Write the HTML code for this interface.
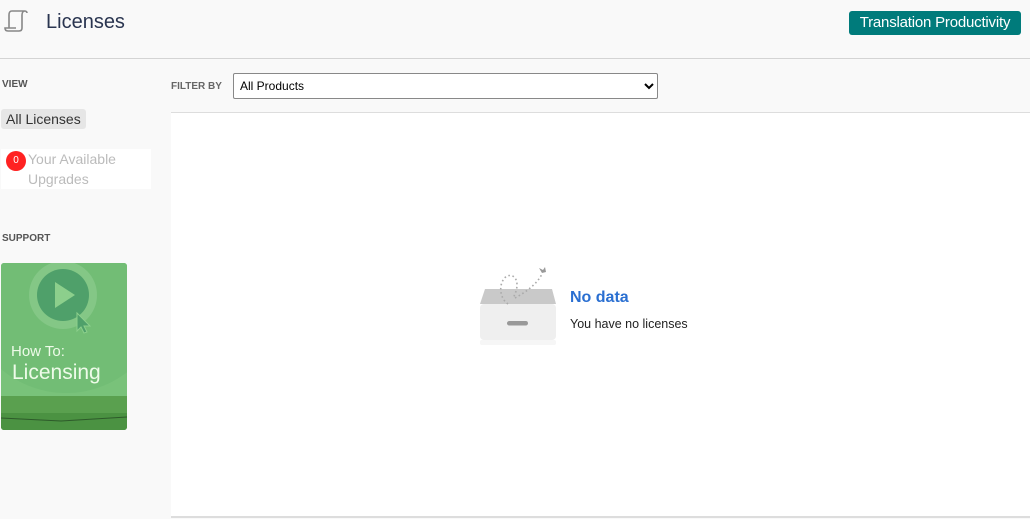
<!DOCTYPE html>
<html><head><meta charset="utf-8"><style>
*{margin:0;padding:0;box-sizing:border-box}
body{width:1030px;height:519px;background:#f9f9f9;font-family:"Liberation Sans",sans-serif;position:relative;overflow:hidden}
.hdr{position:absolute;left:0;top:0;width:1030px;height:59px;border-bottom:1px solid #d4d4d4}
.title{position:absolute;left:46px;top:11px;font-size:20px;color:#2a3550}
.tp{position:absolute;left:849px;top:11px;width:172px;height:24px;background:#007b7b;color:#fff;border-radius:3px;font-size:15px;text-align:center;line-height:24px;letter-spacing:-0.2px}
.lbl{position:absolute;font-size:10px;font-weight:bold;color:#555}
.all{position:absolute;left:1px;top:109px;width:85px;height:20px;background:#e6e6e6;border-radius:3px;font-size:14px;color:#333;padding-left:5px;line-height:20px}
.upg{position:absolute;left:1px;top:149px;width:150px;height:40px;background:#fff;font-size:14px;color:#bbb;line-height:20px;padding-left:27px}
.badge{position:absolute;left:5px;top:2px;width:20px;height:20px;border-radius:50%;background:#f22;color:#fff;font-size:10px;text-align:center;line-height:20px}
.card{position:absolute;left:1px;top:263px;width:126px;height:167px;border-radius:3px;overflow:hidden;background:#79c27a}
.main{position:absolute;left:171px;top:112px;width:859px;height:406px;background:#fff;border-top:1px solid #ddd;border-bottom:2px solid #ddd}
select{position:absolute;left:233px;top:73px;width:425px;height:26px;font-size:12px;font-family:"Liberation Sans",sans-serif;border:1px solid #888;border-radius:2px;background:#fff;padding-left:2px}
</style></head><body>
<div class="hdr">
<svg style="position:absolute;left:4px;top:8px" width="24" height="26" viewBox="0 0 24 26" fill="none" stroke="#888" stroke-width="1.6"><path d="M8 3h13c-2 0-3 2-3 4v13c0 2-1 3-3 3H4c-2 0-3-1-3-3h11"/><path d="M8 3c-2 0-3 1-3 4v13"/><path d="M21 3c1 0 2 1 2 2"/></svg>
<div class="title">Licenses</div>
<div class="tp">Translation Productivity</div>
</div>
<div class="lbl" style="left:2px;top:79px">VIEW</div>
<div class="all">All Licenses</div>
<div class="upg"><div class="badge">0</div>Your Available<br>Upgrades</div>
<div class="lbl" style="left:2px;top:233px">SUPPORT</div>
<div class="card">
<svg width="126" height="167" style="position:absolute;left:0;top:0">
<circle cx="65" cy="30" r="100" fill="#72bd75"/>
<circle cx="62" cy="32" r="34" fill="#84c786"/>
<circle cx="62" cy="32" r="26" fill="#4fa06a"/>
<path d="M54 19v26l20-13z" fill="#8ccf8c"/>
<path d="M76 50l0 18 4-4 3 6 3-1-3-6 6 0z" fill="#4fa06a" stroke="#8ccf8c" stroke-width="1"/>
<rect x="0" y="133" width="126" height="34" fill="#5aa04f"/>
<rect x="0" y="150" width="126" height="17" fill="#4b9242"/>
<path d="M0 155 L60 158 L126 154" stroke="#2d5a2a" stroke-width="1" fill="none"/>
<text x="10" y="93" font-family="Liberation Sans" font-size="15" fill="#eefbe9">How To:</text>
<text x="11" y="116" font-family="Liberation Sans" font-size="21" fill="#eefbe9">Licensing</text>
</svg>
</div>
<div class="lbl" style="left:171px;top:81px;color:#666">FILTER BY</div>
<select><option>All Products</option></select>
<div class="main">
<svg style="position:absolute;left:300px;top:147px" width="100" height="90" viewBox="0 0 100 90">
<path d="M14 29H81L85 44H9z" fill="#c9c9c9"/>
<rect x="9" y="80" width="76" height="5" rx="2" fill="#f6f6f6"/>
<rect x="9" y="44" width="76" height="36" rx="4" fill="#efefef"/>
<rect x="36" y="61" width="21" height="4.5" rx="2.2" fill="#999"/>
<path d="M37 44C28 38 27 22 36 16C45 13 50 24 42 38M44 38C55 32 66 24 71 14" stroke="#aaa" stroke-width="1.6" stroke-dasharray="1.6 2.6" fill="none"/>
<path d="M71 13l-3-5 4 2 2-3 1 5z" fill="#999"/>
</svg>
<div style="position:absolute;left:399px;top:176px;font-size:16px;font-weight:bold;color:#2a6fd1">No data</div>
<div style="position:absolute;left:399px;top:204px;font-size:12.5px;color:#222">You have no licenses</div>
</div>
</body></html>
